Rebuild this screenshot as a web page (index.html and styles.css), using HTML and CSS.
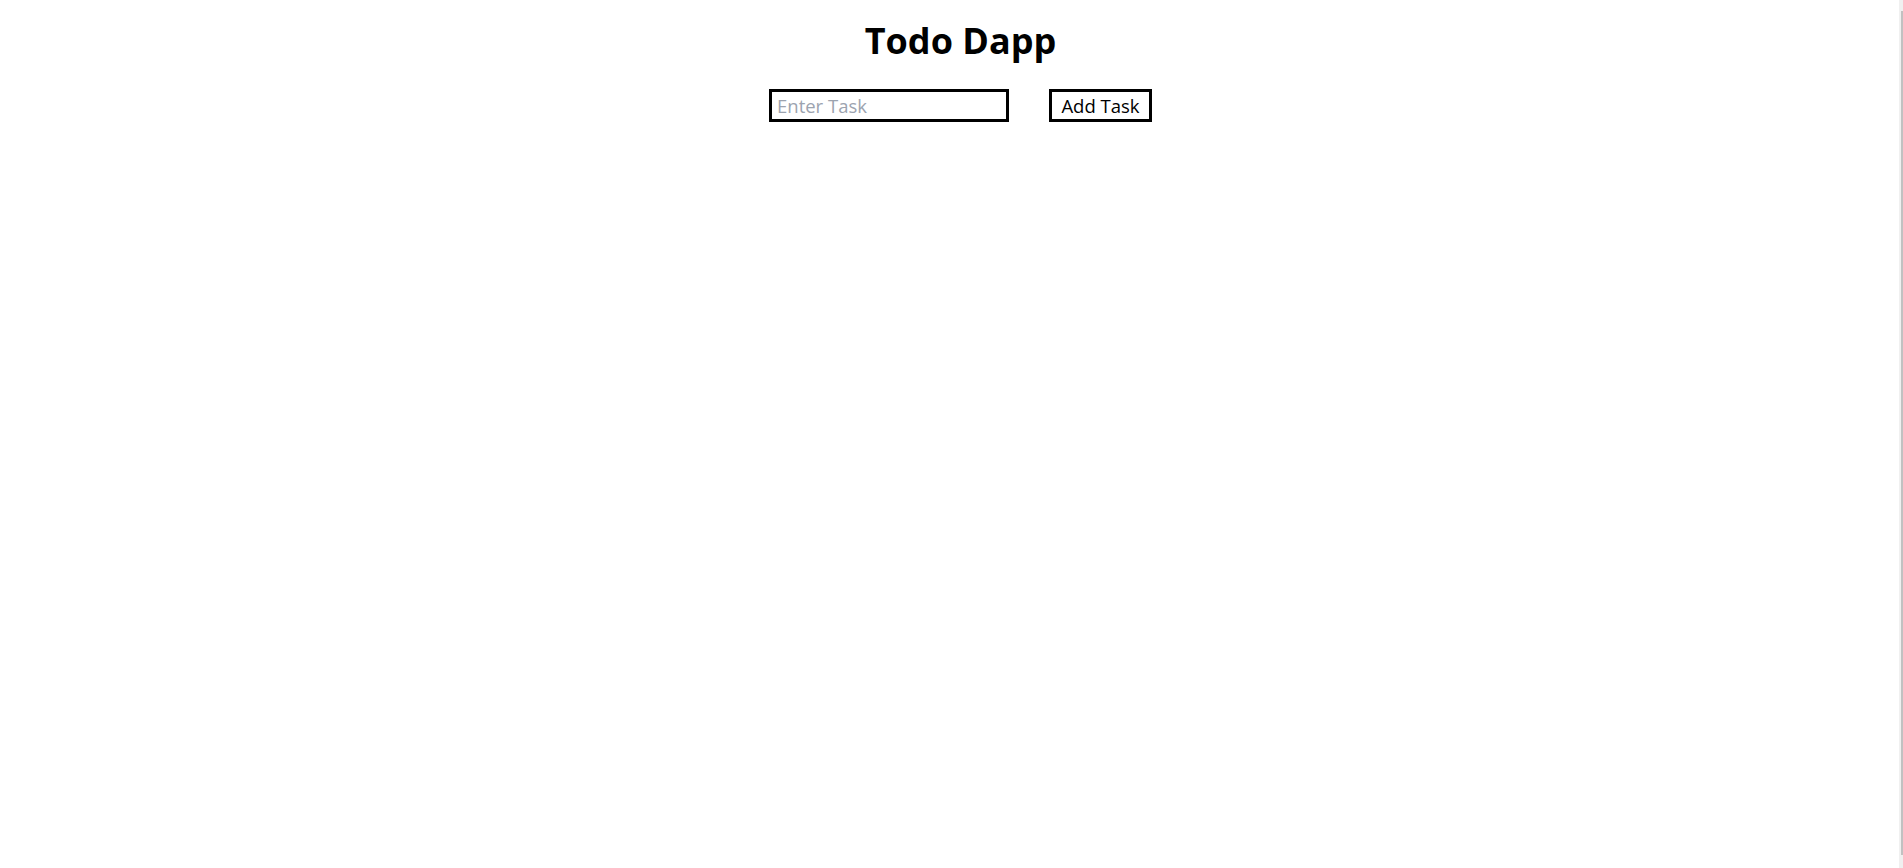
FILE: index.html
```html
<!DOCTYPE html>
<html lang="en">
<head>
<meta charset="utf-8">
<title>Todo Dapp</title>
<link rel="stylesheet" href="styles.css">
</head>
<body>
<main class="app">
  <h1 class="title">Todo Dapp</h1>
  <form class="task-form">
    <input class="task-input" type="text" placeholder="Enter Task">
    <button class="task-button" type="button">Add Task</button>
  </form>
</main>
<div class="scrollbar" aria-hidden="true"><div class="scrollbar-thumb"></div></div>
</body>
</html>
```

FILE: styles.css
```css
body {
  margin: 0;
  background: #ffffff;
  color: #000000;
  font-family: "Open Sans", "Noto Sans", sans-serif;
}
.app {
  display: flex;
  flex-direction: column;
  align-items: center;
  padding: 18px 0 0 18px;
}
.title {
  margin: 0;
  font-size: 36px;
  line-height: 45px;
  font-weight: 700;
}
.task-form {
  display: flex;
  gap: 40px;
  margin-top: 26px;
}
.task-input {
  box-sizing: border-box;
  width: 240px;
  height: 33px;
  margin: 0;
  border: 3px solid #000;
  padding: 0 5px;
  font-family: inherit;
  font-size: 18.5px;
  color: #000;
  background: #fff;
  outline: none;
}
.task-input::placeholder {
  color: #9ca3af;
}
.task-button {
  box-sizing: border-box;
  width: 103px;
  height: 33px;
  margin: 0;
  border: 3px solid #000;
  padding: 0;
  font-family: inherit;
  font-size: 18.5px;
  color: #000;
  background: #fff;
}
.scrollbar {
  position: fixed;
  top: 0;
  right: 0;
  bottom: 0;
  width: 4px;
  background: #f0f0f0;
  display: flex;
  flex-direction: column;
  align-items: flex-end;
  padding: 11px 0 13px;
  box-sizing: border-box;
}
.scrollbar-thumb {
  width: 2px;
  flex: 1;
  background: #c1c1c1;
}
```
